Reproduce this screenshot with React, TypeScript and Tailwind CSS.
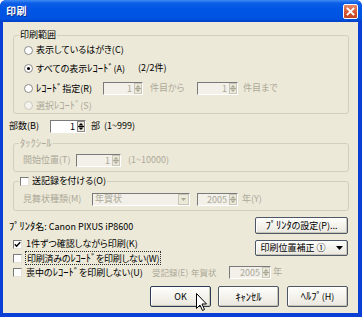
import React from "react";

const G = "text-[#ACA899]";

function H({ children }: { children: React.ReactNode }) {
  return <span className="[font-feature-settings:normal] text-[10.5px] leading-[12px]">{children}</span>;
}

function Arrows({ disabled }: { disabled?: boolean }) {
  const c = disabled ? "#ACA899" : "#000";
  return (
    <svg width="8" height="11" viewBox="0 0 8 11" className="shrink-0">
      <rect x="0.5" y="0.5" width="7" height="10" fill="#ECE9D8" stroke={disabled ? "#C9C7BA" : "#8A8A8A"} />
      <polygon points="1.5,4.5 4,2 6.5,4.5" fill={c} />
      <line x1="1" y1="5.5" x2="7" y2="5.5" stroke={c} strokeWidth="1" />
      <polygon points="1.5,6.5 4,9 6.5,6.5" fill={c} />
    </svg>
  );
}

function Spin({ value, disabled, w }: { value: string; disabled?: boolean; w: string }) {
  return (
    <div
      className={`${w} h-[13px] flex items-center border-t border-l border-t-[#7A7A7A] border-l-[#7A7A7A] border-r border-b border-r-white border-b-white ${
        disabled ? "bg-[#F2F0E8]" : "bg-white"
      }`}
    >
      <span className={`flex-1 text-right pr-[2px] leading-[11px] ${disabled ? G : "text-black"}`}>{value}</span>
      <Arrows disabled={disabled} />
    </div>
  );
}

function Radio({ checked, disabled }: { checked?: boolean; disabled?: boolean }) {
  return (
    <span
      className={`w-[9px] h-[9px] rounded-full border flex items-center justify-center shrink-0 ${
        disabled ? "border-[#C9C7BA] bg-[#F4F3EE]" : "border-[#8C8C8C] bg-white"
      }`}
    >
      {checked && <span className="w-[3px] h-[3px] rounded-full bg-black" />}
    </span>
  );
}

function Check({ checked }: { checked?: boolean }) {
  return (
    <span className="w-[9px] h-[9px] shrink-0 bg-white border-t border-l border-t-[#7A7A7A] border-l-[#7A7A7A] border-r border-b border-r-[#E4E2D8] border-b-[#E4E2D8] flex items-center justify-center">
      {checked && (
        <svg width="7" height="7" viewBox="0 0 7 7">
          <polyline points="0.8,3.2 2.6,5.2 6.2,1.2" fill="none" stroke="#000" strokeWidth="1.4" />
        </svg>
      )}
    </span>
  );
}

function Btn({ children, w, h, def }: { children: React.ReactNode; w: string; h: string; def?: boolean }) {
  return (
    <div
      className={`${w} ${h} rounded-[2px] border ${
        def ? "border-[#2A3A55]" : "border-[#4E5766]"
      } bg-gradient-to-b from-[#FEFEFC] to-[#E9E7DE] flex items-center justify-center shadow-[inset_-1px_-1px_0_#C9C6B8,inset_1px_1px_0_#FFFFFF]`}
    >
      {children}
    </div>
  );
}

export default function App() {
  return (
    <div className="w-[362px] h-[317px] bg-[#0A3FD6] rounded-t-[6px] flex flex-col font-['Noto_Sans_CJK_JP',sans-serif] text-[9px] leading-[12px] text-black [font-feature-settings:'palt'] relative overflow-hidden">
      {/* title bar */}
      <div className="h-[22px] shrink-0 rounded-t-[6px] bg-[linear-gradient(to_bottom,#3F8CF3_0%,#0C5EE6_14%,#0055E5_45%,#0053E1_85%,#0040C4_100%)] flex items-center pl-[6px] pr-[4px]">
        <span className="text-white font-bold text-[10px] leading-[12px] tracking-[0.5px] [text-shadow:1px_1px_0_#0A2C8C]">印刷</span>
        <div className="ml-auto w-[15px] h-[15px] rounded-[2px] border border-white bg-[linear-gradient(to_bottom,#E88A68,#D5532E_60%,#C04422)] flex items-center justify-center">
          <svg width="9" height="9" viewBox="0 0 9 9">
            <path d="M1.5 1.5 L7.5 7.5 M7.5 1.5 L1.5 7.5" stroke="#fff" strokeWidth="1.8" strokeLinecap="square" />
          </svg>
        </div>
      </div>

      {/* client */}
      <div className="flex-1 ml-[3px] mr-[4px] mb-[4px] bg-[#ECE9D8] flex flex-col pt-[7px]">
        {/* 印刷範囲 */}
        <fieldset className="ml-[10px] w-[336px] border border-[#D0D0BF] rounded-[3px]">
          <legend className="ml-[5px] px-[1px] leading-[12px]">印刷範囲</legend>
          <div className="flex flex-col pl-[10px] pt-[2px] pb-[1px]">
            <div className="h-[14px] flex items-center gap-[3px]">
              <Radio />
              <span>表示しているはがき(C)</span>
            </div>
            <div className="h-[14px] mt-[4px] flex items-center">
              <Radio checked />
              <span className="ml-[3px] w-[102px] whitespace-nowrap">
                すべての表示<H>ﾚｺｰﾄﾞ</H>(A)
              </span>
              <span>(2/2件)</span>
            </div>
            <div className="h-[14px] mt-[6px] flex items-center">
              <Radio />
              <span className="ml-[3px] w-[67px] whitespace-nowrap">
                <H>ﾚｺｰﾄﾞ</H>指定(R)
              </span>
              <Spin value="1" disabled w="w-[40px]" />
              <span className={`ml-[7px] w-[47px] ${G}`}>件目から</span>
              <Spin value="1" disabled w="w-[41px]" />
              <span className={`ml-[5px] ${G}`}>件目まで</span>
            </div>
            <div className="h-[14px] mt-[3px] flex items-center gap-[3px]">
              <Radio disabled />
              <span className={G}>
                選択<H>ﾚｺｰﾄﾞ</H>(S)
              </span>
            </div>
          </div>
        </fieldset>

        {/* 部数 */}
        <div className="h-[14px] mt-[5px] ml-[6px] flex items-center">
          <span className="w-[41px]">部数(B)</span>
          <Spin value="1" w="w-[36px]" />
          <span className="ml-[5px]">部</span>
          <span className="ml-[4px]">(1~999)</span>
        </div>

        {/* タックシール */}
        <fieldset className="ml-[10px] mt-[4px] w-[336px] border border-[#D0D0BF] rounded-[3px]">
          <legend className={`ml-[5px] px-[1px] leading-[12px] ${G}`}>
            <H>ﾀｯｸｼｰﾙ</H>
          </legend>
          <div className="pl-[9px] pt-[3px] pb-[4px]">
            <div className="h-[14px] flex items-center">
              <span className={`w-[53px] ${G}`}>開始位置(T)</span>
              <Spin value="1" disabled w="w-[45px]" />
              <span className={`ml-[7px] ${G}`}>(1~10000)</span>
            </div>
          </div>
        </fieldset>

        {/* 送記録 */}
        <fieldset className="ml-[10px] mt-[3px] w-[336px] border border-[#D0D0BF] rounded-[3px]">
          <legend className="ml-[5px] px-[1px] leading-[12px] flex items-center gap-[3px]">
            <Check />
            <span>送記録を付ける(O)</span>
          </legend>
          <div className="pl-[9px] pt-[5px] pb-[4px]">
            <div className="h-[14px] flex items-center">
              <span className={`w-[69px] ${G}`}>見舞状種類(M)</span>
              <div className="w-[98px] h-[13px] flex items-center bg-[#F2F0E8] border-t border-l border-t-[#7A7A7A] border-l-[#7A7A7A] border-r border-b border-r-white border-b-white">
                <span className={`flex-1 pl-[2px] ${G}`}>年賀状</span>
                <div className="w-[11px] h-[11px] bg-[#ECE9D8] border border-[#C9C7BA] flex items-center justify-center">
                  <svg width="5" height="3" viewBox="0 0 5 3">
                    <polygon points="0,0 5,0 2.5,3" fill="#ACA899" />
                  </svg>
                </div>
              </div>
              <div className="ml-[7px]">
                <Spin value="2005" disabled w="w-[41px]" />
              </div>
              <span className={`ml-[4px] ${G}`}>年(Y)</span>
            </div>
          </div>
        </fieldset>

        {/* printer + options */}
        <div className="mt-[1px] flex">
          <div className="flex flex-col">
            <div className="h-[14px] mt-[7px] ml-[6px] flex items-center">
              <span className="whitespace-nowrap">
                <H>ﾌﾟﾘﾝﾀ</H>名: Canon PIXUS iP8600
              </span>
            </div>
            <div className="h-[14px] mt-[4px] ml-[10px] flex items-center gap-[4px]">
              <Check checked />
              <span>1件ずつ確認しながら印刷(K)</span>
            </div>
            <div className="h-[14px] ml-[10px] flex items-center gap-[3px]">
              <Check />
              <span className="border border-dotted border-[#333] px-[1px] leading-[11px] whitespace-nowrap tracking-[-0.2px]">
                印刷済みの<H>ﾚｺｰﾄﾞ</H>を印刷しない(W)
              </span>
            </div>
          </div>
          <div className="ml-auto mr-[10px] pt-[5px] flex flex-col">
            <Btn w="w-[93px]" h="h-[17px]">
              <span className="whitespace-nowrap">
                <H>ﾌﾟﾘﾝﾀ</H>の設定(P)...
              </span>
            </Btn>
            <div className="mt-[6px]">
              <Btn w="w-[93px]" h="h-[16px]">
                <span className="flex items-center gap-[10px]">
                  <span>印刷位置補正 ①</span>
                  <svg width="7" height="4" viewBox="0 0 7 4">
                    <polygon points="0,0 7,0 3.5,4" fill="#000" />
                  </svg>
                </span>
              </Btn>
            </div>
          </div>
        </div>

        <div className="h-[14px] ml-[10px] flex items-center">
          <Check />
          <span className="ml-[4px] w-[126px] whitespace-nowrap">
            喪中の<H>ﾚｺｰﾄﾞ</H>を印刷しない(U)
          </span>
          <span className={`w-[39px] text-[8.5px] whitespace-nowrap ${G}`}>受記録(E)</span>
          <span className={`w-[38px] text-[8.5px] whitespace-nowrap ${G}`}>年賀状</span>
          <Spin value="2005" disabled w="w-[42px]" />
          <span className={`ml-[2px] ${G}`}>年</span>
        </div>

        <div className="mt-[7px] mr-[10px] flex justify-end gap-[7px]">
          <Btn w="w-[61px]" h="h-[21px]" def>
            OK
          </Btn>
          <Btn w="w-[61px]" h="h-[21px]">
            <H>ｷｬﾝｾﾙ</H>
          </Btn>
          <div className="ml-[1px]">
            <Btn w="w-[61px]" h="h-[21px]">
              <span>
                <H>ﾍﾙﾌﾟ</H>(H)
              </span>
            </Btn>
          </div>
        </div>
      </div>

      {/* mouse cursor */}
      <svg width="12" height="19" viewBox="0 0 12 19" className="absolute left-[196px] top-[293px]">
        <path d="M0.5 0.5 L0.5 15.5 L4 12 L6.5 17.5 L8.5 16.5 L6 11 L10.5 11 Z" fill="#fff" stroke="#000" strokeWidth="1" strokeLinejoin="miter" />
      </svg>
    </div>
  );
}
